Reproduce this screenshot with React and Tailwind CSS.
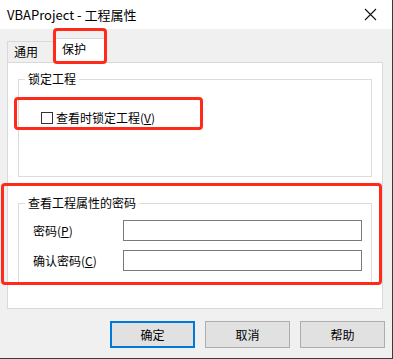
import React from "react";

const font = { fontFamily: '"Noto Sans CJK SC", "Noto Sans", sans-serif' };

function GroupBox({ title, className, children }) {
  return (
    <div className={`relative border border-[#dcdcdc] ${className}`}>
      <span className="absolute -top-[9px] left-[6px] bg-white px-[3px] text-[12px] leading-[16px] text-black">
        {title}
      </span>
      {children}
    </div>
  );
}

function Button({ label, primary }) {
  return (
    <button
      className={`w-[85px] h-[27px] bg-[#e1e1e1] text-[12px] text-black ${
        primary ? "border-2 border-[#0078d7]" : "border border-[#adadad]"
      }`}
    >
      {label}
    </button>
  );
}

export default function App() {
  return (
    <div
      style={font}
      className="relative w-[393px] h-[359px] bg-[#f0f0f0] border-r border-b border-[#3c3c3c] overflow-hidden"
    >
      {/* title bar */}
      <div className="h-[29px] bg-white flex items-center justify-between pl-[7px] pr-[15px]">
        <span className="text-[13px] text-black">VBAProject - 工程属性</span>
        <svg width="13" height="13" viewBox="0 0 13 13">
          <path d="M1 1 L12 12 M12 1 L1 12" stroke="#111" strokeWidth="1.1" />
        </svg>
      </div>

      <div className="px-[7px]">
        {/* tabs */}
        <div className="h-[33px] flex items-end">
          <div className="w-[47px] h-[21px] border border-b-0 border-[#d9d9d9] bg-[#f0f0f0] text-[12px] pl-[6px] leading-[20px]">
            通用
          </div>
          <div className="w-[52px] h-[25px] border border-b-0 border-[#d9d9d9] bg-white text-[12px] pl-[7px] leading-[20px] -mb-px relative z-10">
            保护
          </div>
        </div>

        {/* panel */}
        <div className="w-[376px] h-[247px] bg-white border border-[#d9d9d9] pt-[16px] px-[10px]">
          <GroupBox title="锁定工程" className="h-[98px]">
            <div className="flex items-center gap-[3px] pl-[22px] pt-[30px]">
              <span className="w-[12px] h-[12px] border border-[#333] bg-white" />
              <span className="text-[12px] leading-[16px]">查看时锁定工程(<u>V</u>)</span>
            </div>
          </GroupBox>

          <GroupBox title="查看工程属性的密码" className="h-[82px] mt-[26px]">
            <div className="flex flex-col gap-[9px] pt-[16px] pl-[14px]">
              <div className="flex items-center">
                <span className="w-[90px] text-[12px]">密码(<u>P</u>)</span>
                <div className="w-[239px] h-[21px] border border-[#7a7a7a] bg-white" />
              </div>
              <div className="flex items-center">
                <span className="w-[90px] text-[12px]">确认密码(<u>C</u>)</span>
                <div className="w-[239px] h-[21px] border border-[#7a7a7a] bg-white" />
              </div>
            </div>
          </GroupBox>
        </div>

        {/* buttons */}
        <div className="flex justify-end gap-[10px] pt-[12px]">
          <Button label="确定" primary />
          <Button label="取消" />
          <Button label="帮助" />
        </div>
      </div>

      {/* red annotation boxes */}
      <div className="absolute left-[53px] top-[28px] w-[54px] h-[36px] border-[3px] border-[#ff2a1a] rounded-[4px] pointer-events-none z-20" />
      <div className="absolute left-[14px] top-[97px] w-[189px] h-[33px] border-[3px] border-[#ff2a1a] rounded-[4px] pointer-events-none z-20" />
      <div className="absolute left-[1px] top-[183px] w-[381px] h-[102px] border-[3px] border-[#ff2a1a] rounded-[4px] pointer-events-none z-20" />
    </div>
  );
}
